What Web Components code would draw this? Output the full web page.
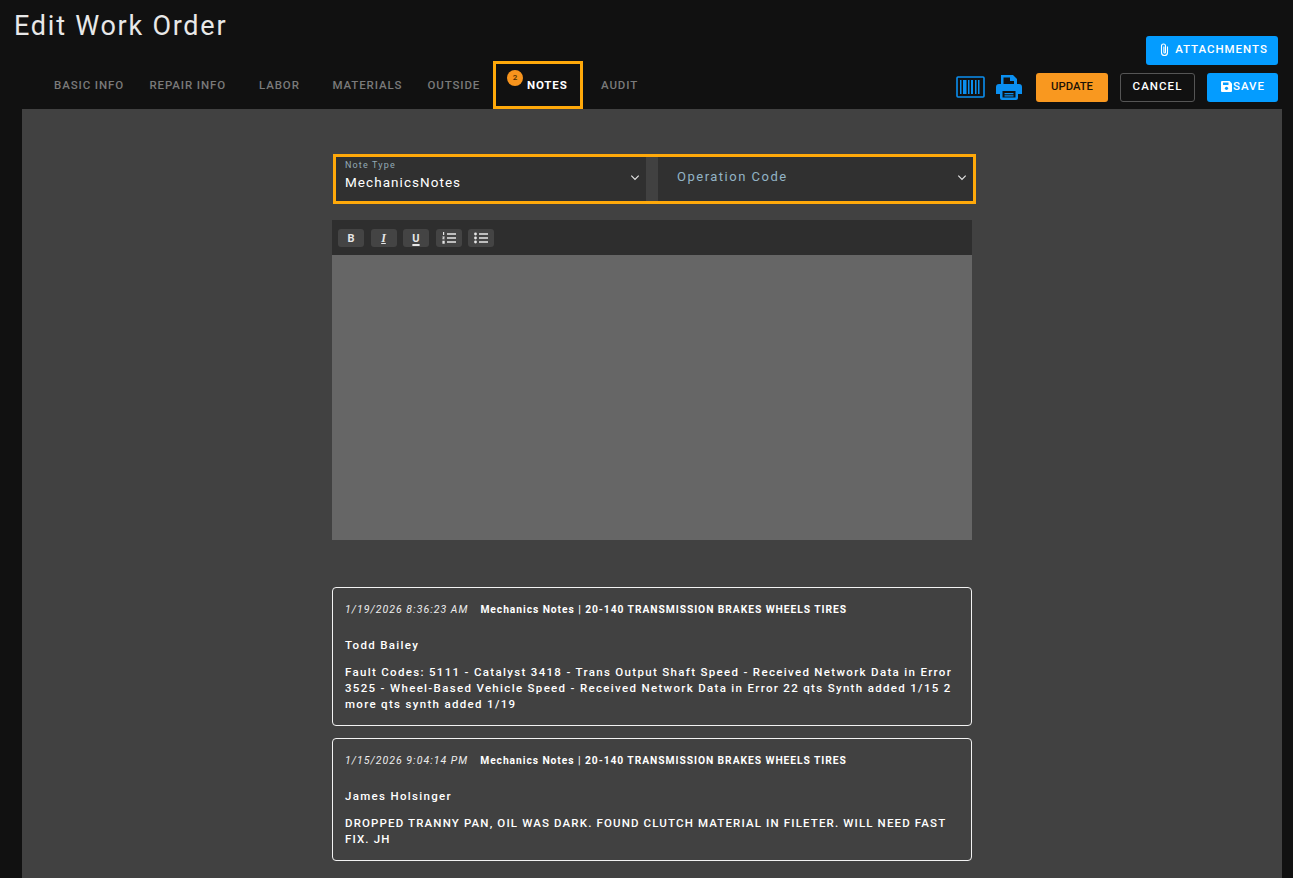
<!DOCTYPE html>
<html>
<head>
<meta charset="utf-8">
<title>Edit Work Order</title>
<style>
  html, body { margin: 0; height: 100%; background: #111111; overflow: hidden; }
  body { font-family: Roboto, "Liberation Sans", sans-serif; color: #fff; }
</style>
</head>
<body>
<wo-page></wo-page>

<script>
// small tab in the top row, "active" gets the amber box
class WoTab extends HTMLElement {
  constructor() {
    super();
    this.attachShadow({mode: "open"});
    this.shadowRoot.innerHTML = `
    <style>
      :host { display: block; box-sizing: border-box; height: 48px; position: relative;
        font: 500 11.5px/48px Roboto, sans-serif; letter-spacing: 0.88px; color: #7a7a7a; white-space: nowrap; }
      :host([active]) { border: 3px solid #ffa90a; color: #fff; font-weight: 700; line-height: 42px; letter-spacing: 0.85px; }
      #badge { display: none; position: absolute; left: 11px; top: 6px; width: 16px; height: 16px; border-radius: 50%;
        background: #f7941d; color: #4a2c00; font: 500 8px/16px Roboto, sans-serif; text-align: center; letter-spacing: 0; }
      :host([badge]) #badge { display: block; }
    </style>
    <span id="badge"></span><slot></slot>`;
  }
  connectedCallback() {
    this.shadowRoot.querySelector("#badge").textContent = this.getAttribute("badge") || "";
  }
}
customElements.define("wo-tab", WoTab);

class WoButton extends HTMLElement {
  constructor() {
    super();
    this.attachShadow({mode: "open"});
    this.shadowRoot.innerHTML = `
    <style>
      :host { display: flex; align-items: center; justify-content: center; box-sizing: border-box; height: 29px;
        padding-bottom: 2px; border-radius: 3px; background: #049cff; color: #fff; white-space: nowrap;
        font: 500 11.5px Roboto, sans-serif; letter-spacing: 1.05px; }
      :host([kind="update"]) { background: #f9981f; color: #1b1306; letter-spacing: 0; font-size: 11.3px; }
      :host([kind="cancel"]) { background: transparent; border: 1px solid #555; }
    </style>
    <slot></slot>`;
  }
}
customElements.define("wo-button", WoButton);

class WoSelect extends HTMLElement {
  constructor() {
    super();
    this.attachShadow({mode: "open"});
    this.shadowRoot.innerHTML = `
    <style>
      :host { display: block; box-sizing: border-box; position: relative; height: 44px; background: #303030; }
      #label { position: absolute; left: 9px; top: 2px; font: 400 9px/12px Roboto, sans-serif; letter-spacing: 1.15px; color: #93a9b5; }
      #value { position: absolute; left: 9px; top: 15px; font: 400 13.5px/20px Roboto, sans-serif; letter-spacing: 1.05px; color: #fff; }
      :host([placeholder]) #label { left: 19px; top: 11px; font-size: 13px; line-height: 18px; letter-spacing: 1.5px; color: #93b4c6; }
      svg { position: absolute; right: 6px; top: 17px; }
    </style>
    <div id="label"></div>
    <div id="value"><slot></slot></div>
    <svg width="10" height="8" viewBox="0 0 10 8" fill="none" stroke="#e4e4e4" stroke-width="1.2"><path d="M1.3 1.700l3.700 3.700 3.700-3.700"/></svg>`;
  }
  connectedCallback() {
    this.shadowRoot.querySelector("#label").textContent = this.getAttribute("label");
  }
}
customElements.define("wo-select", WoSelect);

// toolbar + empty grey text area
class WoEditor extends HTMLElement {
  constructor() {
    super();
    this.attachShadow({mode: "open"});
    this.shadowRoot.innerHTML = `
    <style>
      :host { display: block; }
      #bar { display: flex; gap: 6.5px; height: 35px; box-sizing: border-box; padding: 9px 6px 0; background: #2e2e2e; }
      .tb { display: flex; align-items: center; justify-content: center; width: 26px; height: 18px; border-radius: 3px;
        background: #444; color: #e6e6e6; font: 700 11px Roboto, sans-serif; }
      #ital { font: italic 700 12px "Liberation Serif", serif; text-decoration: underline; }
      #under { text-decoration: underline; text-decoration-thickness: 1.500px; text-underline-offset: 1.500px; }
    </style>
    <div id="bar">
      <div class="tb">B</div>
      <div class="tb"><span id="ital">I</span></div>
      <div class="tb"><span id="under">U</span></div>
      <div class="tb"><svg width="14" height="12" viewBox="0 0 14 12" fill="#e6e6e6"><path d="M5 1.200h9v1.600H5zM5 5.200h9v1.600H5zM5 9.200h9v1.600H5z"/><path d="M1 0h1.200v3H1zM0.400 4.400h2.200v1L1.400 6.400h1.300v.9H.4v-.9l1.200-1H.4zM.4 8.800h2.300v3H.4z"/></svg></div>
      <div class="tb"><svg width="14" height="12" viewBox="0 0 14 12" fill="#e6e6e6"><path d="M5 1.200h9v1.600H5zM5 5.200h9v1.600H5zM5 9.200h9v1.600H5z"/><circle cx="1.500" cy="2" r="1.400"/><circle cx="1.500" cy="6" r="1.400"/><circle cx="1.500" cy="10" r="1.400"/></svg></div>
    </div>
    <div style="height:285px;background:#666666"></div>`;
  }
}
customElements.define("wo-editor", WoEditor);

class WoNote extends HTMLElement {
  constructor() {
    super();
    this.attachShadow({mode: "open"});
    this.shadowRoot.innerHTML = `
    <style>
      :host { display: block; box-sizing: border-box; border: 1px solid #f2f2f2; border-radius: 4px;
        padding: 13px 12px 8px; font: 500 11.5px/16px Roboto, sans-serif; letter-spacing: 1.32px; color: #fff; }
      #head { display: flex; gap: 12px; height: 18px; line-height: 18px; white-space: nowrap; }
      #when { font-style: italic; font-weight: 400; font-size: 10.5px; letter-spacing: 1.03px; color: #eee; }
      #title { font-weight: 700; font-size: 10.3px; letter-spacing: 0.93px; }
      #who { margin-top: 18px; height: 16px; }
      #body { margin-top: 11px; }
    </style>
    <div id="head"><span id="when"></span><span id="title"></span></div>
    <div id="who"></div>
    <div id="body"><slot></slot></div>`;
  }
  connectedCallback() {
    this.shadowRoot.querySelector("#when").textContent = this.getAttribute("when");
    this.shadowRoot.querySelector("#title").textContent = this.getAttribute("heading");
    this.shadowRoot.querySelector("#who").textContent = this.getAttribute("who");
  }
}
customElements.define("wo-note", WoNote);

class WoPage extends HTMLElement {
  constructor() {
    super();
    this.attachShadow({mode: "open"});
    this.shadowRoot.innerHTML = `
    <style>
      :host { display: block; height: 878px; overflow: hidden; background: #111; }
      #top { display: flex; justify-content: space-between; height: 61px; }
      h1 { margin: 9px 0 0 14px; font: 400 27px/34px Roboto, sans-serif; letter-spacing: 1.75px; color: #e8e8e8; }
      #attach { width: 132px; margin: 36px 15px 0 0; padding: 0 0 3px 3px; letter-spacing: 0.95px; }
      #nav { display: flex; justify-content: space-between; height: 48px; padding: 0 15px 0 54px; }
      #tabs { display: flex; }
      #actions { display: flex; align-items: center; box-sizing: border-box; height: 52px; }
      #main { height: 769px; margin: 0 11px 0 22px; background: #414141; padding-top: 45px; box-sizing: border-box; }
      #col { width: 640px; margin-left: 310px; }
      #selects { box-sizing: border-box; display: grid; grid-template-columns: 310px 315px; gap: 12px; width: 643px; height: 50px; margin-left: 1px; border: 3px solid #ffa90a; }
      wo-editor { margin-top: 16px; }
      wo-note + wo-note { margin-top: 12px; }
      #n1 { margin-top: 47px; height: 139px; }
      #n2 { height: 123px; }
      #n2 span { letter-spacing: 1.14px; }
      svg { display: block; }
    </style>
    <div id="top">
      <h1>Edit Work Order</h1>
      <wo-button id="attach">
        <svg width="11" height="13" viewBox="0 0 11 13" fill="none" stroke="#fff" stroke-width="1.100" style="margin-right:5px"><path d="M8.500 3.500v6a3 3 0 0 1-6 0V3a2 2 0 0 1 4 0v6.200a.8.8 0 0 1-1.600 0V3.500"/></svg>ATTACHMENTS
      </wo-button>
    </div>
    <div id="nav">
      <div id="tabs">
        <wo-tab style="width:95.5px">BASIC INFO</wo-tab>
        <wo-tab style="width:109.5px">REPAIR INFO</wo-tab>
        <wo-tab style="width:73.5px">LABOR</wo-tab>
        <wo-tab style="width:95px">MATERIALS</wo-tab>
        <wo-tab style="width:65.5px">OUTSIDE</wo-tab>
        <wo-tab active badge="2" style="width:90px;padding-left:31px">NOTES</wo-tab>
        <wo-tab style="margin-left:18px">AUDIT</wo-tab>
      </div>
      <div id="actions">
        <svg width="29" height="22" viewBox="0 0 29 22" fill="none" style="margin-right:11px">
          <rect x="1" y="1" width="27" height="20" rx="1" stroke="#0b8ff0" stroke-width="1.600"/>
          <path d="M4 4h1.500v14H4zM7 4h3.500v14H7zM12 4h1.500v14H12zM15 4h2v14h-2zM19 4h1.500v14H19zM22 4h1.500v14H22z" fill="#0b8ff0"/>
        </svg>
        <svg width="26" height="26" viewBox="0 0 26 26" style="margin-right:14px">
          <path fill="#0b8ff0" d="M5 1h12l4 4v6H18V7h-4V3.500H7.500V11H5zM3 10h20a3 3 0 0 1 3 3v7h-4v4a2 2 0 0 1-2 2H6a2 2 0 0 1-2-2v-4H0v-7a3 3 0 0 1 3-3z"/>
          <path fill="#111" d="M6.500 17h13v6.500h-13z"/>
          <path fill="#0b8ff0" d="M8.500 19h9v1.200h-9zM8.500 21.300h9v1.200h-9z"/>
        </svg>
        <wo-button kind="update" style="width:72px">UPDATE</wo-button>
        <wo-button kind="cancel" style="width:75px;margin-left:12px">CANCEL</wo-button>
        <wo-button style="width:71px;margin-left:12px;padding-left:1px">
          <svg width="11" height="11" viewBox="0 0 11 11" style="margin-right:1px"><path fill="#fff" d="M1 0h7.500L11 2.500V10a1 1 0 0 1-1 1H1a1 1 0 0 1-1-1V1a1 1 0 0 1 1-1z"/><path fill="#049cff" d="M2 1.500h5.500v2.500H2z"/><circle cx="5.500" cy="7.300" r="1.600" fill="#049cff"/></svg>SAVE
        </wo-button>
      </div>
    </div>
    <div id="main">
      <div id="col">
        <div id="selects">
          <wo-select label="Note Type">MechanicsNotes</wo-select>
          <wo-select placeholder label="Operation Code"></wo-select>
        </div>
        <wo-editor></wo-editor>
        <wo-note id="n1" when="1/19/2026 8:36:23 AM" heading="Mechanics Notes | 20-140 TRANSMISSION BRAKES WHEELS TIRES" who="Todd Bailey">Fault Codes: 5111 - Catalyst 3418 - Trans Output Shaft Speed - Received Network Data in Error 3525 - Wheel-Based Vehicle Speed - Received Network Data in Error 22 qts Synth added 1/15 2 more qts synth added 1/19</wo-note>
        <wo-note id="n2" when="1/15/2026 9:04:14 PM" heading="Mechanics Notes | 20-140 TRANSMISSION BRAKES WHEELS TIRES" who="James Holsinger"><span>DROPPED TRANNY PAN, OIL WAS DARK. FOUND CLUTCH MATERIAL IN FILETER. WILL NEED FAST FIX. JH</span></wo-note>
      </div>
    </div>`;
  }
}
customElements.define("wo-page", WoPage);
</script>
</body>
</html>
